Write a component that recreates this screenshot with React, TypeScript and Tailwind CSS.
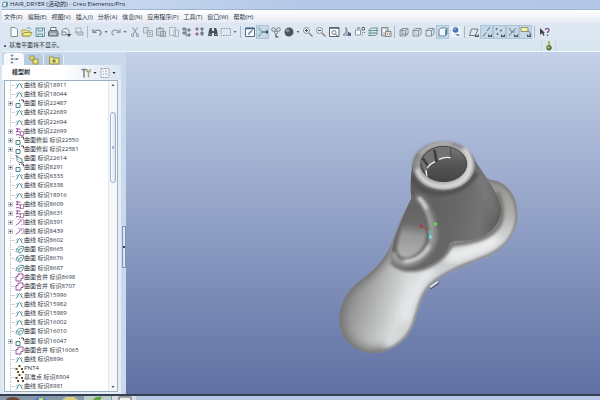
import type { ReactNode } from 'react'
import clsx from 'clsx'

type Tool = { name: string; icon: ReactNode; active?: boolean; menu?: boolean }
type Kind = 'curve' | 'surface' | 'copy' | 'trim' | 'project' | 'blend' | 'merge' | 'point'
type Feature = { name: string; kind: Kind; open?: boolean }

const menus = ['文件(F)', '编辑(E)', '视图(V)', '插入(I)', '分析(A)', '信息(N)', '应用程序(P)', '工具(T)', '窗口(W)', '帮助(H)']

const features: Feature[] = [
  { name: '曲线 标识18911', kind: 'curve' },
  { name: '曲线 标识18044', kind: 'curve' },
  { name: '曲面 标识22487', kind: 'surface', open: true },
  { name: '曲线 标识22689', kind: 'curve' },
  { name: '曲线 标识22694', kind: 'curve' },
  { name: '曲线 标识22699', kind: 'copy', open: true },
  { name: '曲面修剪 标识22550', kind: 'surface', open: true },
  { name: '曲面修剪 标识22581', kind: 'surface', open: true },
  { name: '曲面 标识22614', kind: 'trim' },
  { name: '曲面 标识8291', kind: 'surface', open: true },
  { name: '曲线 标识8333', kind: 'curve' },
  { name: '曲线 标识8338', kind: 'curve' },
  { name: '曲线 标识18916', kind: 'curve' },
  { name: '曲线 标识8609', kind: 'copy', open: true },
  { name: '曲线 标识8631', kind: 'copy', open: true },
  { name: '曲线 标识8391', kind: 'project', open: true },
  { name: '曲线 标识8439', kind: 'project', open: true },
  { name: '曲线 标识8602', kind: 'curve' },
  { name: '曲面 标识8665', kind: 'blend' },
  { name: '曲面 标识8676', kind: 'blend' },
  { name: '曲面 标识8687', kind: 'blend' },
  { name: '曲面合并 标识8698', kind: 'merge' },
  { name: '曲面合并 标识8707', kind: 'merge' },
  { name: '曲线 标识15996', kind: 'curve' },
  { name: '曲线 标识15982', kind: 'curve' },
  { name: '曲线 标识15989', kind: 'curve' },
  { name: '曲线 标识16002', kind: 'curve' },
  { name: '曲面 标识16010', kind: 'blend' },
  { name: '曲面 标识16047', kind: 'surface', open: true },
  { name: '曲面合并 标识16065', kind: 'merge' },
  { name: '曲线 标识8896', kind: 'curve' },
  { name: 'PNT4', kind: 'point' },
  { name: '基准点 标识8904', kind: 'point' },
  { name: '曲线 标识8981', kind: 'curve' },
]

const featureIcons: Record<Kind, ReactNode> = {
  curve: (
    <>
      <path d="M1 7.500C2.500 7 3 2.500 4.500 2.500S6.500 7 8 7.500" stroke="#3d7f8c" />
      <path d="M1 4l2-1.500M6 2.500L8 4" stroke="#8aa5ad" strokeWidth=".7" />
    </>
  ),
  surface: (
    <>
      <path d="M1 4.500h4v4H1z" stroke="#4b8790" />
      <path d="M4 1.500h1M6 1h2.500v2.500" stroke="#48525c" />
    </>
  ),
  copy: (
    <>
      <path d="M1 2c2-1.500 3 1 4.500 0M3 2L1.500 5c2-1.500 2.500 .5 4 0M1 8c2-1.500 3 .5 5 0" stroke="#8b3f92" />
      <path d="M5.500 4.500h3v4h-3z" stroke="#a561a8" strokeWidth=".8" />
    </>
  ),
  trim: (
    <>
      <path d="M2 1.500v5l2 2h4.500M3 3.500l4 1.500v3" stroke="#5d8f92" />
      <path d="M.500 1.500L3 3" stroke="#555" />
    </>
  ),
  project: (
    <>
      <path d="M3 1.500h5.500v5H6" stroke="#c79bd0" strokeWidth=".8" />
      <path d="M1 7.500C2 5 3 7 4 5s1-2.500 3-2" stroke="#a04aae" />
    </>
  ),
  blend: (
    <>
      <path d="M1 7c1-5 3-6 7.500-5.500C8.500 5 7 8 4 8M3 8c0-3 1.500-4.500 4-4.500" stroke="#4f9299" />
      <path d="M1.500 3.500L5 6.500" stroke="#71a9ae" strokeWidth=".8" />
    </>
  ),
  merge: <path d="M3 1h5v4.500H6V8H1V3.500h2z" stroke="#98519c" strokeLinejoin="round" />,
  point: (
    <path d="M3.500 2h2M.500 5h2M6 5h2M2 8h2M7 8h2" stroke="#6b4a2a" strokeWidth="1.800" />
  ),
}

const page = <path d="M3 1.500h4l2.500 2.500v6.500H3z" fill="#fff" stroke="#73808c" />
const eye = <path d="M7 8l2 2 2-2v3H7z" fill="#38424a" stroke="none" />
const cube = <path d="M2 4.500h5.500V10H2zM4 2.500h6V8M4 2.500L2 4.500M10 2.500L7.500 4.500M10 8l-2.500 2" stroke="#77818a" />

const toolGroups: Tool[][] = [
  [
    { name: '新建', icon: page },
    {
      name: '打开',
      icon: (
        <>
          <path d="M1 4h4l1 1h3v5H1z" fill="#f1e391" stroke="#a89a35" />
          <path d="M3 6.500h8L9 10H1z" fill="#f6ee6a" stroke="#99903a" />
          <path d="M6 2.500c2-1.500 3-.5 4 1" stroke="#4c86a8" />
        </>
      ),
    },
    {
      name: '保存',
      icon: <path d="M2 2h8.500v8.500H2zM4 2v3h4.500V2M4 10.500V8h4.500v2.500" fill="#d5eaf0" stroke="#4e8799" />,
    },
    {
      name: '打印',
      icon: (
        <>
          <path d="M4 1.500h5v4H3z" fill="#fff" stroke="#56606a" />
          <path d="M1.500 6L3 4.500h7L11 6v4H1.500z" fill="#87919a" stroke="#49525b" />
          <path d="M3 8h6" stroke="#e4e9ed" />
        </>
      ),
    },
    {
      name: '发送',
      icon: (
        <>
          <path d="M2 6c0-4 5-5 7-1v4M2 6h4v3H2z" fill="#eef3f6" stroke="#68747e" />
          <path d="M7 8l2 2.500L11 8" fill="#333" stroke="#333" />
        </>
      ),
    },
    {
      name: '链接',
      icon: (
        <>
          <path d="M3 2h5v5H3z" fill="#edf0f3" stroke="#9ba4ad" />
          <path d="M2 6h8v3H5z" fill="#c5ccd3" stroke="#929ca5" />
        </>
      ),
    },
  ],
  [
    { name: '撤消', menu: true, icon: <path d="M2 3v3.500h3.500M2.500 6c3-3 7-2 7.500 0s-1 3-2 3" stroke="#657894" strokeWidth="1.200" /> },
    { name: '重做', menu: true, icon: <path d="M10 3v3.500H6.500M9.500 6c-3-3-7-2-7.500 0s1 3 2 3" stroke="#8492a6" strokeWidth="1.200" /> },
    {
      name: '剪切',
      icon: (
        <>
          <path d="M3.500 1.500L8 8M8.500 1.500L4 8" stroke="#8c97a2" strokeWidth="1.200" />
          <path d="M2.500 8h2v2.500h-2zM7.500 8h2v2.500h-2z" stroke="#8c97a2" />
        </>
      ),
    },
    { name: '复制', icon: <path d="M1.500 1.500h4.500v5.500H1.500zM5.500 4.500h5v6h-5zM7 6.500h2M7 8.500h2" fill="#d5dbe1" stroke="#99a3ad" /> },
    { name: '粘贴', icon: <path d="M1.500 2.500h7v7h-7zM4 1.500h2v1H4zM5.500 5.500h5v5h-5zM7 7.500h2" fill="#c8ced6" stroke="#8b95a1" /> },
    { name: '选择性粘贴', icon: <path d="M1.500 1.500h6v8h-6zM6 4h4.500v6.500H6z" fill="#e5eaee" stroke="#a2abb4" /> },
    {
      name: '再生',
      icon: (
        <>
          <path d="M2 2h2v2H2zM2 6h2v2H2zM7 3h2v2H7zM7 8h2v2H7z" fill="#a0c2d3" stroke="#4a5f72" />
          <path d="M5 2v7l1 1.500" stroke="#4a5660" />
        </>
      ),
    },
    {
      name: '再生管理器',
      icon: (
        <>
          <path d="M2 2h2v2H2zM2 7h2v2H2z" fill="#d95858" stroke="#8b5867" />
          <path d="M7 2h2v2H7zM7 6h2v3H7z" fill="#6c8fbd" stroke="#4e5e78" />
        </>
      ),
    },
    {
      name: '查找',
      icon: (
        <>
          <path d="M2 4l1-2h2v3h2V2h2l1 2 1 6H7V7H5v3H1z" fill="#303840" />
          <path d="M2.500 8.500h1M8.500 8.500h1" stroke="#c7d6e2" />
        </>
      ),
    },
    { name: '选取框', menu: true, icon: <path d="M1 2.500h9.500v7H1z" stroke="#7d8893" strokeDasharray="1.500 1" /> },
  ],
  [
    {
      name: '重画',
      icon: (
        <>
          <path d="M1.500 2h9v8.500h-9z" fill="#fff" stroke="#3c5870" />
          <path d="M1.500 2.500h9" stroke="#2a4b74" strokeWidth="1.500" />
          <path d="M4 8.500l1-2 4-3-3 4z" fill="#608ea6" stroke="#4a7085" strokeWidth=".6" />
        </>
      ),
    },
    {
      name: '旋转中心',
      active: true,
      icon: (
        <>
          <path d="M2 2.500l3 3.500-3 4" stroke="#4d9b72" />
          <path d="M5 6h5" stroke="#26323c" />
          <path d="M9 4.500h2v3H9z" fill="#26323c" />
          <path d="M1.500 2h1M1.500 10h1" stroke="#b66" strokeWidth="1.500" />
        </>
      ),
    },
    {
      name: '定向模式',
      icon: (
        <>
          <circle cx="3.500" cy="3.500" r="1.800" stroke="#5d6872" />
          <circle cx="8.500" cy="3.500" r="1.800" stroke="#5d6872" />
          <circle cx="6" cy="6.500" r="1.500" stroke="#5d6872" />
          <path d="M5 8l4 3.500H5.500z" fill="#3c444b" />
        </>
      ),
    },
    {
      name: '外观库',
      menu: true,
      icon: (
        <>
          <circle cx="6" cy="6" r="4.500" fill="#33383d" />
          <circle cx="4.500" cy="4.500" r="2" fill="#77808a" />
          <path d="M10.500 6A4.500 4.500 0 0 1 5 10.400C8 10 10 8.500 10.500 6z" fill="#9ba3ab" />
        </>
      ),
    },
    {
      name: '放大',
      icon: (
        <>
          <circle cx="4.500" cy="4.500" r="3" fill="#edf4f8" stroke="#76828d" />
          <path d="M3 4.500h3M4.500 3v3" stroke="#30383f" />
          <path d="M7 7l3.500 3.500" stroke="#8f7659" strokeWidth="1.500" />
        </>
      ),
    },
    {
      name: '缩小',
      icon: (
        <>
          <circle cx="4.500" cy="4.500" r="3" fill="#edf4f8" stroke="#76828d" />
          <path d="M3 4.500h3" stroke="#30383f" />
          <path d="M7 7l3.500 3.500" stroke="#8f7659" strokeWidth="1.500" />
        </>
      ),
    },
    {
      name: '重新调整',
      icon: (
        <>
          <path d="M1.500 1.500h9.500v9H1.500z" fill="#fff" stroke="#3f4b57" />
          <path d="M1.500 2h9.500" stroke="#3f4b57" strokeWidth="1.500" />
          <circle cx="6" cy="6.500" r="2" stroke="#5e6a75" />
          <path d="M7.500 8L9.500 10" stroke="#3b454e" />
        </>
      ),
    },
    {
      name: '重定向',
      icon: (
        <>
          <path d="M5 1.500v4.500L2 9h4V3.500z" fill="#dbe3ea" stroke="#6a757f" />
          <path d="M7 6l3 1v3H6.500z" fill="#3b5368" />
        </>
      ),
    },
    {
      name: '已命名视图',
      icon: (
        <>
          <path d="M1.500 4h5v5h-5z" fill="#fff" stroke="#7b8791" />
          <path d="M3 2h3M8 1.500h2.500v2.500H8zM8 6.500h1M10 6.500h1M8 9h1" stroke="#4f5b66" />
        </>
      ),
    },
    {
      name: '层',
      icon: (
        <>
          <path d="M1.500 9.500L4 7h7L8.500 9.500z" fill="#d8e9e5" stroke="#598c86" />
          <path d="M1.500 7L4 4.500h7L8.500 7z" fill="#d8e9e5" stroke="#598c86" />
          <path d="M1.500 4.500L4 2h7L8.500 4.500z" fill="#d8e9e5" stroke="#598c86" />
        </>
      ),
    },
    {
      name: '视图管理器',
      icon: (
        <>
          <path d="M1.500 1.500h6.500v8.500h-6.500z" fill="#c8cbce" stroke="#777d83" />
          <path d="M3 3h2v3H3z" fill="#fff" />
          <path d="M5.500 5.500H11v5H5.500z" fill="#ede6df" stroke="#79726d" />
          <path d="M7 8h1M9 8h1" stroke="#444" />
        </>
      ),
    },
  ],
  [
    { name: '线框', icon: <>{cube}<path d="M4 2.500V8h6M4 8l-2 2" stroke="#77818a" /></> },
    { name: '隐藏线', icon: <>{cube}<path d="M4 5v3h4" stroke="#b1bac2" /></> },
    { name: '无隐藏线', icon: cube },
    {
      name: '着色',
      active: true,
      icon: (
        <>
          <path d="M2 4l2-2h6v6l-2 2H2z" fill="#fff" stroke="#577b87" />
          <path d="M8 4l2-2v6l-2 2z" fill="#398a9a" />
        </>
      ),
    },
    {
      name: '增强的真实感',
      icon: (
        <>
          <path d="M1 1h10v10H1z" fill="#f3f7fc" />
          <circle cx="5.500" cy="4" r="2.800" fill="#2d59b0" />
          <circle cx="4.700" cy="3.200" r="1" fill="#8eb1e8" />
          <path d="M5 8h4l1 2H7z" fill="#7889a5" />
        </>
      ),
    },
  ],
  [
    { name: '平面显示', icon: <><path d="M1.500 9.500L3.500 3H10L7.500 9.500z" stroke="#69635a" />{eye}</> },
    { name: '轴显示', active: true, icon: <><path d="M2 10.500l3-4M6 5l3-4" stroke="#515b64" />{eye}</> },
    { name: '点显示', active: true, icon: <><path d="M1.500 3h2M2.500 2v2M6 4.500h2M7 3.500v2M2.500 8h2M3.500 7v2" stroke="#515b64" />{eye}</> },
    { name: '坐标系显示', active: true, icon: <><path d="M2 2l3 4-3 4M5 6l4-4M5 6h3" stroke="#636c63" />{eye}</> },
    { name: '注释显示', active: true, icon: <><path d="M1 1.500h7v4H1z" fill="#fbf7ac" stroke="#8a8758" />{eye}<path d="M8 4.500l2 2v3" stroke="#555" /></> },
  ],
]

const modelTools = [
  {
    name: '设置',
    icon: (
      <>
        <path d="M1.500 2.500h5M4 2v8.500" stroke="#666d74" strokeWidth="1.500" />
        <path d="M7 2v2.500h3V2M8.500 5v5.500" stroke="#a29a6a" strokeWidth="1.500" />
      </>
    ),
  },
  { name: '显示', icon: <path d="M2 1.500h8v9H2zM4 4h1M6 4h2M4 7h1M6 7h2" fill="#f5f8fb" stroke="#8c97a1" strokeDasharray="2 .7" /> },
]

const Icon = ({ children }: { children: ReactNode }) => (
  <svg viewBox="0 0 12 12" className="h-3 w-3 opacity-85" fill="none" aria-hidden="true">
    {children}
  </svg>
)

const Caret = ({ className }: { className?: string }) => (
  <svg viewBox="0 0 6 6" className={clsx('h-[6px] w-[6px] shrink-0', className)} aria-hidden="true">
    <path d="M1.500 2h3L3 4z" fill="currentColor" />
  </svg>
)

const ToolButton = ({ tool }: { tool: Tool }) => (
  <button
    aria-label={tool.name}
    className={clsx(
      'flex h-[14px] shrink-0 items-center text-[#5f6b78]',
      tool.active && 'bg-[#c3d9ea] shadow-[inset_0_0_0_1px_#aec3d4]',
    )}
  >
    <span className="flex w-[13px] justify-center">
      <Icon>{tool.icon}</Icon>
    </span>
    {tool.menu && <Caret />}
  </button>
)

const TitleBar = () => (
  <header className="flex h-[10px] shrink-0 items-center gap-[2px] border-b border-[#9fb3d3] bg-linear-to-r from-[#d3e0f2] via-[#b4c8e8] to-[#b3c6e7]">
    <svg viewBox="0 0 8 8" className="h-[7px] w-[6px] shrink-0" aria-hidden="true">
      <path d="M1 2l1-1h5v5L6 7H1z" fill="#e9f5f5" stroke="#2c7077" />
      <path d="M5.500 2L7 1v5L5.500 7z" fill="#2a7c86" />
    </svg>
    <h1 className="text-[6px] leading-[9px] whitespace-nowrap text-[#202a38]">HAIR_DRYER (活动的) - Creo Elements/Pro</h1>
  </header>
)

const MenuBar = () => (
  <nav className="flex h-[13px] shrink-0 items-center gap-[5px] bg-linear-to-b from-white to-[#e6eaf5] pt-[2px] pl-[2px]">
    {menus.map((menu) => (
      <button key={menu} className="text-[6px] leading-[9px] whitespace-nowrap">
        {menu}
      </button>
    ))}
  </nav>
)

const ToolBar = () => (
  <div className="flex h-[17px] shrink-0 items-center overflow-hidden bg-[#dce7f1] pl-[5px]">
    {toolGroups.map((group) => (
      <div key={group[0].name} className="flex shrink-0 items-center">
        {group.map((tool) => (
          <ToolButton key={tool.name} tool={tool} />
        ))}
        <span className="mx-[2px] h-3 w-px bg-[#a9b8c8]" />
      </div>
    ))}
    <ToolButton
      tool={{
        name: '帮助',
        icon: (
          <>
            <path d="M2 2v7l2-2 1.500 3L6.500 9 5.500 7H7z" fill="#222" />
            <path d="M7.500 4c0-2.500 3.500-2 3.500 0 0 1.500-1.500 1.500-1.500 3M9.500 8.500V10" stroke="#6d3178" strokeWidth="1.300" />
          </>
        ),
      }}
    />
  </div>
)

const MessageBar = () => (
  <div className="flex h-3 shrink-0 items-center border-b border-[#eef4f9] bg-[#dae6ef] pl-[2px]">
    <span className="mr-[3px] h-[2px] w-[2px] rounded-full bg-[#1d2f8c]" />
    <p className="flex-1 text-[6px] leading-[9px]">基准平面将不显示。</p>
    <div className="mr-11 flex h-full w-[15px] items-center justify-center border-x border-[#cbd8e3]">
      <svg viewBox="0 0 8 12" className="h-[11px] w-2" aria-hidden="true">
        <path d="M3 1h2v5H3z" fill="#b6ae4c" />
        <circle cx="4" cy="8.500" r="2.500" fill="#5f8a2d" stroke="#48602b" />
        <circle cx="3.500" cy="8" r="1" fill="#c5df87" />
      </svg>
    </div>
  </div>
)

const FeatureRow = ({ feature }: { feature: Feature }) => (
  <li className="flex min-h-0 flex-1 items-center">
    {feature.open ? (
      <button
        aria-label="展开"
        className="mr-[2px] ml-[3px] flex h-[5px] w-[5px] shrink-0 items-center justify-center border border-[#c3cbd3] bg-white"
      >
        <span className="h-px w-px bg-[#3b444d] shadow-[1px_0_0_#8a939c,-1px_0_0_#8a939c,0_1px_0_#8a939c,0_-1px_0_#8a939c]" />
      </button>
    ) : (
      <span className="ml-[5px] flex w-[5px] shrink-0 items-center self-stretch border-l border-dotted border-[#b9c1c9]">
        <span className="h-px w-[4px] bg-[#d0d6dc]" />
      </span>
    )}
    <svg viewBox="0 0 9 9" className="h-[9px] w-[9px] shrink-0" fill="none" aria-hidden="true">
      {featureIcons[feature.kind]}
    </svg>
    <span className="text-[6px] leading-[9px] whitespace-nowrap">{feature.name}</span>
  </li>
)

const ModelTree = () => (
  <aside className="flex w-[119px] shrink-0 flex-col">
    <div className="flex h-[13px] shrink-0 items-end bg-[#cbd9ec] pl-[2px]">
      <button aria-label="模型树" className="flex h-3 w-5 items-center justify-center rounded-t-sm bg-[#f8fafd]">
        <Icon>
          <path d="M3 2h2v1H3zM3 5.500h2v1H3zM3 9h2v1H3zM8 5.500h2v1H8zM5.500 6H8" stroke="#727d88" />
        </Icon>
      </button>
      <button aria-label="文件夹浏览器" className="flex h-[11px] w-5 items-center justify-center rounded-t-sm border-r border-[#e9f0f8] bg-[#b9cbe1]">
        <Icon>
          <path d="M2 2h4v4H2zM5 5h5v5H5z" fill="#eee55f" stroke="#908a35" />
        </Icon>
      </button>
      <button aria-label="收藏夹" className="flex h-[11px] w-5 items-center justify-center rounded-t-sm border-r border-[#e9f0f8] bg-[#b9cbe1]">
        <Icon>
          <path d="M1.500 3h4v1H11v6H1.500z" fill="#f5ec72" stroke="#8d8434" />
          <path d="M6 5v4M4 7h4" stroke="#58572c" />
        </Icon>
      </button>
    </div>
    <div className="flex h-[15px] shrink-0 items-center bg-linear-to-r from-white via-white to-[#d9e4f2] pr-[3px] pl-[10px]">
      <h2 className="flex-1 text-[6px] leading-[9px] font-bold">模型树</h2>
      {modelTools.map((tool) => (
        <button key={tool.name} aria-label={tool.name} className="flex items-center pr-[1px] text-[#20262c]">
          <Icon>{tool.icon}</Icon>
          <Caret />
        </button>
      ))}
    </div>
    <div className="flex min-h-0 flex-1 bg-[#e4edf7] pr-[3px] pb-[2px] pl-[2px]">
      <div className="flex min-h-0 flex-1 border border-[#9eafc0] bg-white">
        <ul className="flex min-h-0 flex-1 flex-col overflow-hidden">
          {features.map((feature) => (
            <FeatureRow key={feature.name} feature={feature} />
          ))}
        </ul>
        <div className="flex w-[9px] shrink-0 flex-col items-center border-l border-[#e2e7ed] bg-[#f5f7fa] text-[#444f5b]">
          <Caret className="mt-[1px] rotate-180" />
          <div className="mt-6 flex h-[71px] w-[6px] items-center justify-center rounded-sm border border-[#9cb1c8] bg-linear-to-r from-white to-[#d7e2ee]">
            <span className="h-[3px] w-[2px] bg-[#a8b9ca]" />
          </div>
          <Caret className="mt-auto mb-[1px]" />
        </div>
      </div>
    </div>
  </aside>
)

const Splitter = () => (
  <div className="flex w-[5px] shrink-0 flex-col items-end bg-[#cbd9ed]">
    <div className="flex-1" />
    <button aria-label="折叠" className="flex h-[42px] w-[4px] items-center justify-center border border-[#8496b4] bg-[#d9e4f3]">
      <span className="h-[2px] w-[2px] bg-[#34435c]" />
    </button>
    <div className="h-[126px]" />
  </div>
)

const BODY =
  'M515 153C565 160 594 205 593 262C590 325 545 365 500 383C440 408 385 425 340 462C305 492 298 535 282 585C262 640 205 675 150 672C92 666 56 622 58 565C60 520 85 482 120 456C160 425 188 398 210 355C228 305 248 250 278 203L400 120Z'
const CONE =
  'M277 110C271 150 270 180 275 208L330 300L388 345C400 333 425 337 450 333C510 325 545 285 543 235C535 195 500 145 465 95C440 30 300 20 277 110Z'
const GRIP =
  'M275 205C280 185 305 184 325 204C350 240 360 300 390 340C380 380 340 410 290 420C240 428 212 405 214 372C222 320 255 250 275 205Z'

const HairDryer = () => (
  <g transform="translate(194 77) scale(.33333)">
    <defs>
      <linearGradient id="body" x1="70" y1="500" x2="290" y2="570" gradientUnits="userSpaceOnUse">
        <stop offset="0" stopColor="#858585" />
        <stop offset=".35" stopColor="#aaabab" />
        <stop offset=".75" stopColor="#d9dbdc" />
        <stop offset="1" stopColor="#cccfd1" />
      </linearGradient>
      <linearGradient id="flange" x1="540" y1="160" x2="520" y2="360" gradientUnits="userSpaceOnUse">
        <stop offset="0" stopColor="#8f8f8c" />
        <stop offset=".5" stopColor="#b3b3b0" />
        <stop offset="1" stopColor="#e2e3e3" stopOpacity="0" />
      </linearGradient>
      <linearGradient id="cone" x1="275" y1="200" x2="540" y2="240" gradientUnits="userSpaceOnUse">
        <stop offset="0" stopColor="#5c5c5c" />
        <stop offset=".5" stopColor="#676767" />
        <stop offset=".8" stopColor="#747474" />
        <stop offset="1" stopColor="#5d5d5d" />
      </linearGradient>
      <linearGradient id="rim" x1="290" y1="60" x2="440" y2="180" gradientUnits="userSpaceOnUse">
        <stop offset="0" stopColor="#8b8b8b" />
        <stop offset=".5" stopColor="#aeaeae" />
        <stop offset="1" stopColor="#c4c4c4" />
      </linearGradient>
      <linearGradient id="bore" x1="0" y1="50" x2="0" y2="160" gradientUnits="userSpaceOnUse">
        <stop offset="0" stopColor="#7a7a7a" />
        <stop offset=".5" stopColor="#565656" />
        <stop offset="1" stopColor="#444" />
      </linearGradient>
      <linearGradient id="pocket" x1="285" y1="220" x2="262" y2="395" gradientUnits="userSpaceOnUse">
        <stop offset="0" stopColor="#5f5f5f" />
        <stop offset=".38" stopColor="#6c6c6c" />
        <stop offset=".55" stopColor="#979797" />
        <stop offset="1" stopColor="#b4b4b4" />
      </linearGradient>
      <filter id="soft4" x="-30%" y="-30%" width="160%" height="160%">
        <feGaussianBlur stdDeviation="4" />
      </filter>
      <filter id="soft12" x="-30%" y="-30%" width="160%" height="160%">
        <feGaussianBlur stdDeviation="12" />
      </filter>
      <clipPath id="bodyClip">
        <path d={BODY} />
      </clipPath>
      <clipPath id="coneClip">
        <path d={CONE} />
      </clipPath>
      <clipPath id="boreClip">
        <ellipse cx="371" cy="105" rx="69" ry="53" />
      </clipPath>
    </defs>

    <path d={BODY} fill="url(#body)" />
    <g clipPath="url(#bodyClip)">
      <path d="M460 130H610V370H460Z" fill="url(#flange)" />
      <path d="M380 385C440 375 490 360 535 325" fill="none" stroke="#f0f1f1" strokeWidth="34" filter="url(#soft12)" />
      <path d="M340 420C290 460 270 510 250 580" fill="none" stroke="#e8eaec" strokeWidth="30" filter="url(#soft12)" />
      <path d={BODY} fill="none" stroke="#77787a" strokeWidth="11" filter="url(#soft4)" />
      <path d="M210 355C188 398 160 425 120 456C70 490 50 540 60 590C80 660 140 680 200 662" fill="none" stroke="#777" strokeWidth="26" filter="url(#soft12)" />
      <path d="M388 348C420 340 500 340 535 290C550 260 550 230 530 190" fill="none" stroke="#777" strokeWidth="16" filter="url(#soft4)" />
      <path d="M215 395C240 440 350 430 392 348" fill="none" stroke="#6a6a6a" strokeWidth="14" filter="url(#soft4)" />
    </g>

    <path d={CONE} fill="url(#cone)" />
    <g clipPath="url(#coneClip)">
      <path d="M470 140C500 180 520 220 522 260" fill="none" stroke="#808080" strokeWidth="14" filter="url(#soft12)" />
      <path d="M276 140C290 205 420 220 470 130" fill="none" stroke="#505050" strokeWidth="14" filter="url(#soft4)" />
    </g>

    <ellipse cx="371" cy="110" rx="93" ry="72" fill="url(#rim)" />
    <ellipse cx="371" cy="110" rx="90" ry="69" fill="none" stroke="#777" strokeWidth="6" filter="url(#soft4)" />
    <path d="M292 120C302 180 410 195 444 135C460 105 448 75 430 58" fill="none" stroke="#e0e0e0" strokeWidth="11" filter="url(#soft4)" />
    <path d="M300 75C325 45 365 40 395 44" fill="none" stroke="#c8c8c8" strokeWidth="6" filter="url(#soft4)" />
    <ellipse cx="371" cy="105" rx="69" ry="53" fill="url(#bore)" stroke="#444" strokeWidth="3" />
    <g clipPath="url(#boreClip)" fill="none">
      <path d="M302 100C315 70 350 52 392 54L390 85C350 88 325 105 318 138Z" fill="#737373" />
      <path d="M343 62L350 98M308 88l18 25" stroke="#404040" strokeWidth="8" />
      <path d="M392 50V84" stroke="#505050" strokeWidth="4" />
      <path d="M357 91C368 86 380 84 392 86M322 116C328 108 336 102 345 98M318 124l3 20" stroke="#f1f1f1" strokeWidth="4" />
    </g>

    <path d={GRIP} fill="#666" />
    <path d="M298 210C328 235 350 295 342 335C325 385 285 408 250 406C225 402 216 388 219 368" fill="none" stroke="#868686" strokeWidth="18" filter="url(#soft4)" />
    <path d="M277 222C293 228 308 270 318 305C322 345 298 378 262 387C240 388 231 375 231 355C237 310 260 250 277 222Z" fill="url(#pocket)" filter="url(#soft4)" />
    <path d="M298 207C322 235 340 295 333 335C321 378 285 400 250 399C232 396 223 388 222 372" fill="none" stroke="#a9a9a9" strokeWidth="9" filter="url(#soft4)" />
    <path d="M292 205C304 210 313 224 320 240M328 350C312 380 285 396 252 398" fill="none" stroke="#dedede" strokeWidth="8" filter="url(#soft4)" />

    <path d="M303 291l23 14" stroke="#9d4646" strokeWidth="3" />
    <path d="M326 305l20-20" stroke="#5bc04d" strokeWidth="3" />
    <path d="M326 305l5 19" stroke="#61ccd1" strokeWidth="3" />
    <circle cx="303" cy="291" r="5" fill="#9c4141" />
    <circle cx="346" cy="285" r="5" fill="#65dc50" />
    <circle cx="331" cy="324" r="5" fill="#74dce5" />
    <path d="M330 478l26-19" stroke="#555c68" strokeWidth="9" />
    <path d="M330 475l24-17" stroke="#f4f4f0" strokeWidth="5" />
  </g>
)

const Viewport = () => (
  <main className="min-w-0 flex-1 bg-linear-to-b from-[#c4d1e8] to-[#6070a2]">
    <svg viewBox="0 0 474 342" className="h-full w-full" role="img" aria-label="HAIR_DRYER">
      <HairDryer />
    </svg>
  </main>
)

const TaskBar = () => (
  <footer className="flex h-[6px] shrink-0 overflow-hidden border-t-2 border-[#353f50] bg-[#b7c6e3]">
    <svg viewBox="0 0 136 4" className="h-1 w-[136px]" aria-hidden="true">
      <path d="M0 0h136v4H0z" fill="#8796a9" />
      <path d="M6 4c1-4 12-4 14 0z" fill="#6a493a" />
      <path d="M34 4l3-3h5l5 3z" fill="#458ed6" />
      <path d="M39 2h4v2h-4z" fill="#e5d94d" />
      <path d="M62 4l4-3h8l4 3z" fill="#dacf83" />
      <path d="M84 0h27v4H84z" fill="#bccdc6" />
      <path d="M93 4c1-3 5-4 9-3l-2 3z" fill="#5ea73f" />
      <path d="M112 0h24v4h-24z" fill="#d8dee4" />
      <path d="M119 4V1h12v3" fill="#f2f2f0" stroke="#555c65" />
    </svg>
  </footer>
)

const App = () => {
  return (
    <div className="flex h-screen flex-col overflow-hidden bg-[#cbd9ed] font-['Open_Sans','Noto_Sans_CJK_SC',sans-serif] text-[#2d3440]">
      <div className="flex min-h-0 flex-1 flex-col border-l-2 border-[#dce6f2]">
        <TitleBar />
        <MenuBar />
        <ToolBar />
        <MessageBar />
        <div className="flex min-h-0 flex-1">
          <ModelTree />
          <Splitter />
          <Viewport />
        </div>
      </div>
      <TaskBar />
    </div>
  )
}

export default App
